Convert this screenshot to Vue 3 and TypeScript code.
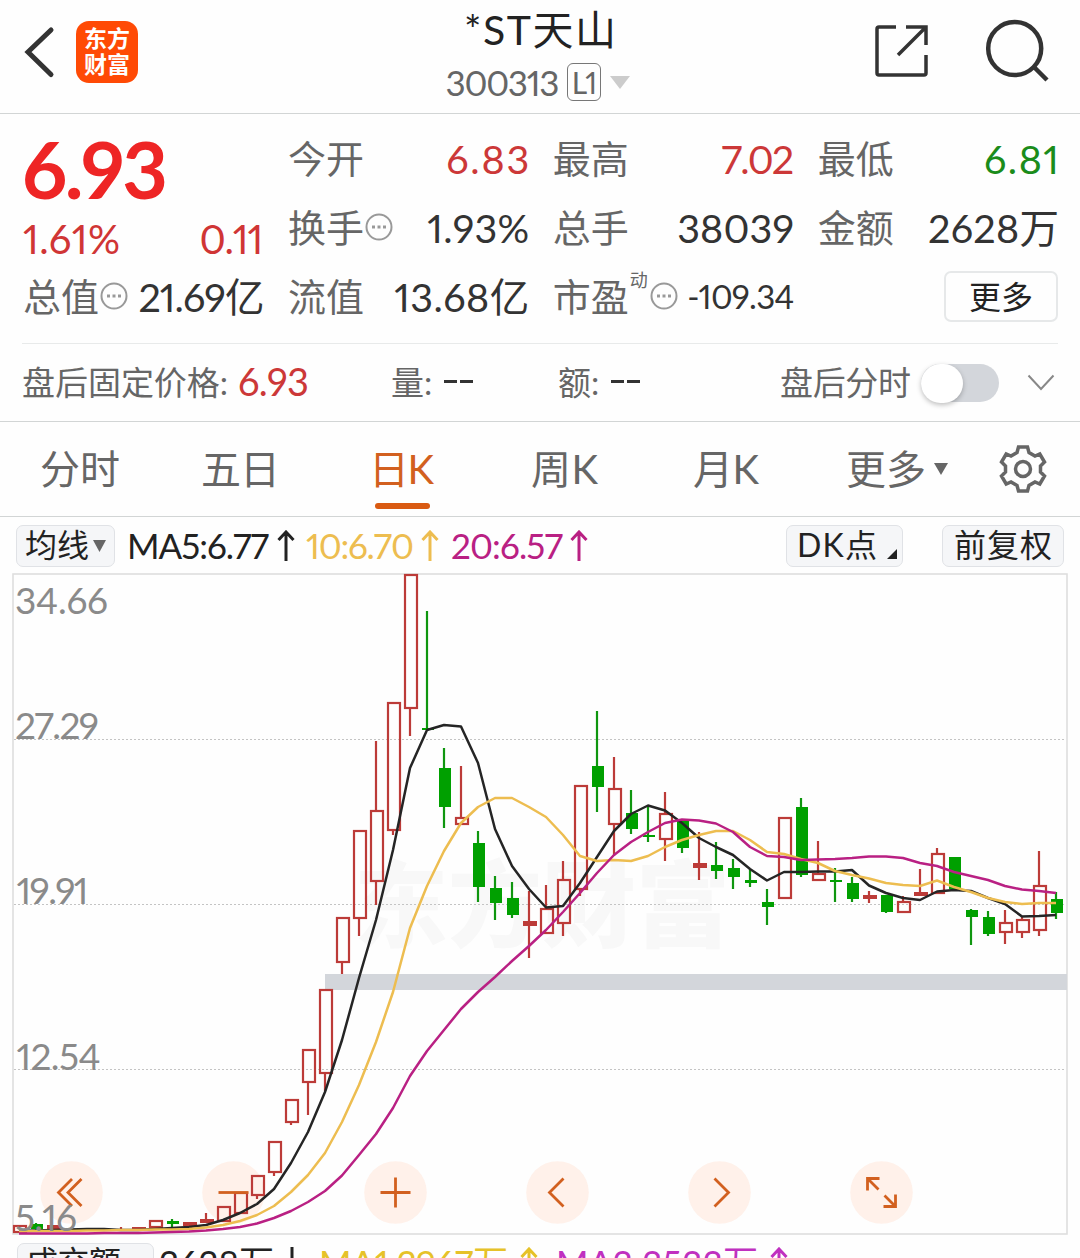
<script setup lang="ts">
import type { Directive } from 'vue'

// Adjusts tracking so that a label takes exactly the given width.
const vFit: Directive<HTMLElement, number> = {
  mounted(el, { value }) {
    const range = document.createRange()
    range.selectNodeContents(el)
    const natural = range.getBoundingClientRect().width
    const gaps = (el.textContent ?? '').trim().length - 1
    const spacing = (value - natural) / gaps
    el.style.letterSpacing = `${spacing}px`
    el.style.marginRight = `${-spacing}px`
  },
}

interface Cell {
  label: string
  value: string
  width: number
  tone?: 'up' | 'down'
  info?: boolean
  sup?: string
  small?: boolean
}

const columns: Cell[][] = [
  [
    { label: '今开', value: '6.83', width: 83, tone: 'up' },
    { label: '换手', value: '1.93%', width: 102, info: true },
    { label: '流值', value: '13.68亿', width: 135 },
  ],
  [
    { label: '最高', value: '7.02', width: 73, tone: 'up' },
    { label: '总手', value: '38039', width: 117 },
    { label: '市盈', value: '-109.34', width: 107, info: true, sup: '动', small: true },
  ],
  [
    { label: '最低', value: '6.81', width: 75, tone: 'down' },
    { label: '金额', value: '2628万', width: 131 },
  ],
]

const tabs = [
  { name: '分时', left: 40, width: 80 },
  { name: '五日', left: 81, width: 79 },
  { name: '日K', left: 89, width: 65, active: true },
  { name: '周K', left: 97, width: 67 },
  { name: '月K', left: 95, width: 66 },
  { name: '更多', left: 87, width: 80 },
]

// kind: r = hollow rising, f = solid rising, g = falling; then open/close edges and high/low.
type Candle = [kind: 'r' | 'f' | 'g', top: number, bottom: number, high: number, low: number]

const candles: Candle[] = [
  ['r', 1225, 1233, 1225, 1233], ['g', 1224, 1229, 1223, 1230], ['f', 1225, 1229, 1225, 1229],
  ['f', 1229, 1231, 1229, 1231], ['g', 1229, 1231, 1229, 1231], ['f', 1229, 1231, 1229, 1231],
  ['f', 1229, 1231, 1227, 1231], ['f', 1227, 1230, 1227, 1230], ['r', 1220, 1228, 1220, 1228],
  ['g', 1221, 1224, 1219, 1227], ['f', 1222, 1226, 1222, 1226], ['f', 1219, 1223, 1213, 1223],
  ['r', 1206, 1222, 1206, 1222], ['r', 1192, 1214, 1192, 1214], ['r', 1175, 1196, 1175, 1199],
  ['r', 1141, 1173, 1141, 1176], ['r', 1099, 1123, 1099, 1125], ['r', 1049, 1083, 1049, 1115],
  ['r', 989, 1074, 989, 1091], ['r', 917, 963, 917, 974], ['r', 830, 919, 830, 936],
  ['r', 810, 882, 741, 905], ['r', 702, 831, 702, 835], ['r', 574, 709, 574, 736],
  ['g', 728, 730, 611, 730], ['g', 768, 807, 748, 828], ['r', 817, 825, 766, 825],
  ['g', 843, 887, 831, 902], ['g', 888, 903, 876, 920], ['g', 898, 915, 882, 918],
  ['f', 921, 926, 891, 958], ['r', 908, 934, 885, 934], ['r', 879, 924, 861, 936],
  ['r', 785, 890, 785, 896], ['g', 766, 787, 711, 812], ['r', 788, 825, 757, 856],
  ['g', 813, 829, 790, 834], ['g', 835, 837, 807, 842], ['r', 813, 840, 792, 861],
  ['g', 820, 848, 820, 853], ['f', 863, 868, 832, 880], ['g', 865, 871, 842, 879],
  ['g', 868, 877, 859, 889], ['g', 880, 883, 869, 887], ['g', 902, 907, 889, 925],
  ['r', 817, 899, 817, 899], ['g', 807, 875, 798, 877], ['r', 873, 881, 841, 881],
  ['g', 880, 882, 868, 902], ['g', 883, 899, 877, 902], ['f', 895, 899, 891, 903],
  ['g', 895, 912, 895, 913], ['r', 901, 913, 896, 913], ['f', 892, 896, 869, 896],
  ['r', 853, 894, 848, 894], ['g', 857, 889, 857, 891], ['g', 910, 917, 909, 945],
  ['g', 917, 934, 911, 936], ['r', 922, 933, 910, 944], ['r', 919, 933, 917, 938],
  ['r', 885, 931, 851, 936], ['g', 899, 913, 892, 919],
]

const ma5 = [
  1231, 1230.5, 1230, 1229.5, 1229, 1229, 1230, 1230, 1229, 1228, 1227, 1225, 1220, 1213, 1204, 1189,
  1163, 1132, 1092, 1040, 978, 920, 850, 768, 730, 725, 726.5, 763, 829, 866, 889, 907.5, 906, 883,
  857, 831, 814, 805.5, 810.5, 823, 838, 847, 855, 869, 880.5, 872, 872, 871.5, 871.5, 870, 885.5,
  893, 898, 900, 891.5, 890, 891, 898, 904, 916.5, 916, 915,
]
const ma10 = [
  1231.5, 1231, 1231, 1231, 1230.5, 1230.5, 1230, 1230, 1229.5, 1229.5, 1229, 1227.5, 1225, 1221,
  1215, 1206, 1192, 1175, 1153, 1122, 1085, 1042, 992, 928, 886, 851, 823, 807, 798, 798, 807, 817,
  835, 856, 861, 860, 861, 856, 847, 840, 835, 831, 831, 840, 852, 854, 859, 863, 871, 875, 878.5,
  883, 885, 886, 880.5, 887, 892, 898, 902, 904, 903, 903,
]
const ma20 = [
  1233.5, 1233.5, 1233.5, 1233.5, 1233.5, 1233, 1233, 1233, 1232.5, 1232, 1231.5, 1230.5, 1229, 1227,
  1223.5, 1218, 1211, 1202, 1191, 1175.5, 1155, 1134, 1108, 1076, 1051, 1030, 1009, 992, 977, 961,
  946, 930, 912, 893, 873, 855, 842, 832, 823, 819.5, 820.5, 823.5, 832, 847, 856, 857, 860, 859.5,
  859, 858, 856.5, 856.5, 858, 863, 866, 872, 876, 880, 886, 889.5, 891, 893,
]

const xAt = (i: number) => 19 + 17 * i
const line = (values: number[]) => values.map((y, i) => `${xAt(i)},${y}`).join(' ')

const scale = [
  { text: '34.66', x: 15, y: 613.5, width: 93 },
  { text: '27.29', x: 15, y: 739, width: 84 },
  { text: '19.91', x: 16.5, y: 904, width: 72 },
  { text: '12.54', x: 16.5, y: 1070, width: 84 },
  { text: '5.16', x: 15, y: 1231, width: 62 },
]

const tools = [
  { x: 71, d: 'M0.500 -13.500 L-13 0 L0.500 13.500 M10 -13.500 L-3.500 0 L10 13.500' },
  { x: 233, d: 'M-15 0 H15' },
  { x: 395, d: 'M-15 0 H15 M0 -15 V15' },
  { x: 557, d: 'M6 -14 L-8 0 L6 14' },
  { x: 719, d: 'M-5 -14 L9 0 L-5 14' },
  { x: 881, d: 'M-14 -2 V-14 H-2 M-14 -14 L-3 -3 M14 2 V14 H2 M14 14 L3 3' },
]
</script>

<template>
  <main class="page">
    <header class="topbar">
      <div class="top-left">
        <svg class="back" width="34" height="54" viewBox="0 0 34 54">
          <path d="M29 5 L6 27 L29 49.500" fill="none" stroke="#333" stroke-width="5" stroke-linecap="round" />
        </svg>
        <div class="logo"><span>东方</span><span>财富</span></div>
      </div>
      <div class="title">
        <div class="name"><span v-fit="152">*ST天山</span></div>
        <div class="code">
          <span v-fit="114">300313</span>
          <span class="level">L1</span>
          <svg width="20" height="13" viewBox="0 0 20 13"><path d="M0 0 H20 L10 13 Z" fill="#ccc" /></svg>
        </div>
      </div>
      <div class="top-right">
        <svg width="54" height="54" viewBox="0 0 54 54" fill="none" stroke="#333" stroke-width="3.500">
          <path d="M22 3 H5 Q3 3 3 5 V49 Q3 51 5 51 H50 Q52 51 52 49 V31" />
          <path d="M32 3 H52 V21 M51 4 L24 31" />
        </svg>
        <svg width="64" height="64" viewBox="0 0 64 64" fill="none" stroke="#333" stroke-width="4.500">
          <circle cx="29.700" cy="29.500" r="26.500" /><path d="M49 48 L62 61" />
        </svg>
      </div>
    </header>

    <section class="quote">
      <div class="col">
        <div class="price"><span v-fit="146">6.93</span></div>
        <div class="change"><span v-fit="97">1.61%</span><span v-fit="64">0.11</span></div>
        <div class="cell">
          <span class="label">总值</span>
          <svg class="dots" width="28" height="28" viewBox="0 0 28 28">
            <circle cx="14" cy="14" r="12.500" /><path d="M7 14 h3 M12.500 14 h3 M18 14 h3" />
          </svg>
          <span class="value"><span v-fit="126">21.69亿</span></span>
        </div>
      </div>
      <div v-for="(col, c) in columns" :key="c" class="col">
        <div v-for="cell in col" :key="cell.label" class="cell">
          <span class="label">{{ cell.label }}</span>
          <sup v-if="cell.sup">{{ cell.sup }}</sup>
          <svg v-if="cell.info" class="dots" width="28" height="28" viewBox="0 0 28 28">
            <circle cx="14" cy="14" r="12.500" /><path d="M7 14 h3 M12.500 14 h3 M18 14 h3" />
          </svg>
          <span class="value" :class="[cell.tone, { small: cell.small }]"><span v-fit="cell.width">{{ cell.value }}</span></span>
        </div>
        <div v-if="c === 2" class="cell end"><button class="more">更多</button></div>
      </div>
    </section>

    <section class="after">
      <div class="fixed"><span v-fit="206">盘后固定价格:</span><b v-fit="71">6.93</b></div>
      <div class="vol"><span>量:</span><i></i><i></i></div>
      <div class="amt"><span>额:</span><i></i><i></i></div>
      <div class="toggle"><span v-fit="131">盘后分时</span><div class="switch"></div></div>
      <svg width="28" height="18" viewBox="0 0 28 18">
        <path d="M1.500 1.500 L14 15 L26.500 1.500" fill="none" stroke="#888" stroke-width="2" />
      </svg>
    </section>

    <nav class="tabs">
      <span
        v-for="tab in tabs" :key="tab.name" class="tab" :class="{ active: tab.active }"
        :style="{ marginLeft: tab.left + 'px', width: tab.width + 'px' }"
      ><span v-fit="tab.width">{{ tab.name }}</span></span>
      <svg class="caret" width="14" height="12" viewBox="0 0 14 12"><path d="M0 0 H14 L7 12 Z" fill="#666" /></svg>
      <svg class="gear" width="50" height="50" viewBox="-25 -25 50 50" fill="none" stroke="#666" stroke-width="3.500">
        <path
          d="M-4.500 -22 H4.500 L6 -16.500 L12 -13 L16.800 -15 L21.500 -7 L17.500 -3 V3 L21.500 7 L16.800 15 L12 13 L6 16.500 L4.500 22 H-4.500 L-6 16.500 L-12 13 L-16.800 15 L-21.500 7 L-17.500 3 V-3 L-21.500 -7 L-16.800 -15 L-12 -13 L-6 -16.500 Z"
        />
        <circle r="7.500" />
      </svg>
    </nav>

    <section class="averages">
      <button class="chip ma">
        <span v-fit="64">均线</span>
        <svg width="13" height="12" viewBox="0 0 13 12"><path d="M0 0 H13 L6.500 12 Z" fill="#666" /></svg>
      </button>
      <div class="avg"><span v-fit="142">MA5:6.77</span>
        <svg width="18" height="31" viewBox="0 0 18 31"><path d="M9 31 V2 M1.500 10 L9 2 L16.500 10" /></svg></div>
      <div class="avg gold"><span v-fit="108">10:6.70</span>
        <svg width="18" height="31" viewBox="0 0 18 31"><path d="M9 31 V2 M1.500 10 L9 2 L16.500 10" /></svg></div>
      <div class="avg pink"><span v-fit="112">20:6.57</span>
        <svg width="18" height="31" viewBox="0 0 18 31"><path d="M9 31 V2 M1.500 10 L9 2 L16.500 10" /></svg></div>
      <button class="chip dk">
        <span v-fit="80">DK点</span>
        <svg width="10" height="10" viewBox="0 0 10 10"><path d="M10 0 V10 H0 Z" fill="#222" /></svg>
      </button>
      <button class="chip adj"><span v-fit="98">前复权</span></button>
    </section>

    <svg class="chart" width="1080" height="665" viewBox="0 572 1080 665">
      <text class="watermark" x="354" y="940" textLength="376">东方财富</text>
      <g fill="none" stroke="#c4c4c4" stroke-dasharray="2 2">
        <path d="M14 739.500 H1066 M14 904.500 H1066 M14 1069.500 H1066" />
      </g>
      <rect x="13" y="574" width="1054" height="660" fill="none" stroke="#dedede" stroke-width="1.600" />
      <rect x="325" y="974" width="742" height="16" fill="#d3d6db" />
      <circle v-for="t in tools" :key="t.x" :cx="t.x + 0.5" cy="1192.500" r="31.300" fill="#fff1ea" />
      <g v-for="([kind, top, bottom, high, low], i) in candles" :key="i">
        <template v-if="kind === 'r'">
          <path :d="`M${xAt(i)} ${high} V${top} M${xAt(i)} ${bottom} V${low}`" stroke="#bc3b38" stroke-width="2.200" />
          <rect :x="xAt(i) - 5" :y="top + 1" width="12" :height="bottom - top - 2" fill="none" stroke="#bc3b38" stroke-width="2.200" />
        </template>
        <template v-else>
          <path :d="`M${xAt(i)} ${high} V${low}`" :stroke="kind === 'g' ? '#0f960f' : '#bc3b38'" stroke-width="2.200" />
          <rect
            :x="xAt(i) - (kind === 'g' ? 5 : 6)" :y="top" :width="kind === 'g' ? 12 : 14" :height="bottom - top"
            :fill="kind === 'g' ? '#00a000' : '#bc3b38'"
          />
        </template>
      </g>
      <g fill="none" stroke-width="2.500" stroke-linejoin="round">
        <polyline :points="line(ma5)" stroke="#252525" />
        <polyline :points="line(ma10)" stroke="#edbd50" />
        <polyline :points="line(ma20)" stroke="#b92083" />
      </g>
      <g fill="none" stroke="#d2601f" stroke-width="2.800">
        <path v-for="t in tools" :key="t.x" :d="t.d" :transform="`translate(${t.x + 0.5} 1192.500)`" />
      </g>
      <text
        v-for="s in scale" :key="s.text" class="scale" :x="s.x" :y="s.y" :textLength="s.width"
      >{{ s.text }}</text>
    </svg>

    <section class="volume">
      <button class="chip amount">
        <span v-fit="95">成交额</span>
        <svg width="13" height="12" viewBox="0 0 13 12"><path d="M0 0 H13 L6.500 12 Z" fill="#666" /></svg>
      </button>
      <div class="avg"><span v-fit="115">2628万</span>
        <svg width="18" height="31" viewBox="0 0 18 31"><path d="M9 0 V29 M1.500 21 L9 29 L16.500 21" /></svg></div>
      <div class="avg yellow"><span v-fit="189">MA1:2967万</span>
        <svg width="18" height="31" viewBox="0 0 18 31"><path d="M9 31 V2 M1.500 10 L9 2 L16.500 10" /></svg></div>
      <div class="avg violet"><span v-fit="202">MA2:3533万</span>
        <svg width="18" height="31" viewBox="0 0 18 31"><path d="M9 31 V2 M1.500 10 L9 2 L16.500 10" /></svg></div>
    </section>
  </main>
</template>

<style>
body {
  background: #fff;
}
</style>

<style scoped>
.page {
  display: flex;
  flex-direction: column;
  width: 1080px;
  height: 1258px;
  overflow: hidden;
  background: #fefefe;
  color: #333;
  font-family: Lato, "Noto Sans CJK SC", sans-serif;
  font-kerning: none;
  font-variant-numeric: proportional-nums;
  white-space: nowrap;
}
.page * {
  box-sizing: border-box;
}
svg {
  display: block;
  flex: none;
}
button {
  font-family: inherit;
  color: #222;
  padding: 0;
}

.topbar {
  display: flex;
  flex: none;
  justify-content: space-between;
  height: 114px;
  border-bottom: 1px solid #d2d5d5;
}
.top-left {
  display: flex;
  width: 300px;
  padding-left: 22px;
}
.back {
  margin-top: 25px;
}
.logo {
  display: flex;
  flex-direction: column;
  align-items: center;
  justify-content: center;
  width: 62px;
  height: 62px;
  margin: 21px 0 0 20px;
  padding-bottom: 2px;
  border-radius: 13px;
  background: #ff4a05;
  color: #fff;
  font-size: 23px;
  font-weight: 700;
  line-height: 26px;
}
.title {
  display: flex;
  flex-direction: column;
  align-items: center;
}
.name {
  height: 60px;
  color: #222;
  font-size: 41px;
  line-height: 59px;
}
.code {
  display: flex;
  align-items: center;
  height: 44px;
  padding-right: 5px;
  color: #666;
  font-size: 35px;
  line-height: 44px;
}
.level {
  width: 34px;
  height: 38px;
  margin: 0 9px 0 7px;
  border: 1.500px solid #777;
  border-radius: 6px;
  font-size: 30px;
  line-height: 36px;
  letter-spacing: -2px;
  text-align: center;
}
.top-right {
  display: flex;
  justify-content: flex-end;
  gap: 57px;
  width: 300px;
  padding-right: 31px;
}
.top-right svg:first-child {
  margin-top: 24px;
}
.top-right svg:last-child {
  margin-top: 19px;
}

.quote {
  display: flex;
  flex: none;
  gap: 24.500px;
  height: 229px;
  padding: 10px 22px 0 23px;
}
.col {
  width: 240.500px;
}
.price {
  height: 90px;
  color: #ee2525;
  font-size: 79px;
  font-weight: 700;
  line-height: 89px;
}
.price span {
  margin-left: -1px;
}
.change {
  display: flex;
  justify-content: space-between;
  height: 48px;
  color: #d03535;
  font-size: 40px;
  line-height: 51px;
}
.cell {
  display: flex;
  align-items: center;
  height: 69px;
  line-height: 69px;
}
.label {
  color: #666;
  font-size: 38px;
}
.value {
  margin-left: auto;
  margin-right: -1px;
  font-size: 39.500px;
}
.value.small {
  font-size: 33px;
}
.up {
  color: #cc3838;
}
.down {
  color: #1b8c1b;
}
sup {
  margin: 0 1px 0 1px;
  padding-bottom: 34px;
  color: #666;
  font-size: 18px;
  line-height: 20px;
}
.dots {
  margin-left: 1px;
  margin-bottom: 2px;
  fill: none;
  stroke: #999;
  stroke-width: 2;
}
.dots path {
  stroke-width: 3;
}
.end {
  justify-content: flex-end;
}
.more {
  width: 114px;
  height: 51px;
  border: 2px solid #e6e8e9;
  border-radius: 7px;
  background: none;
  font-size: 32px;
  line-height: 46px;
}

.after {
  display: flex;
  flex: none;
  align-items: center;
  height: 78px;
  margin-left: 22px;
  margin-right: 22px;
  border-top: 1px solid #e8eaea;
  color: #666;
  font-size: 33px;
}
.after span,
.after b {
  padding-bottom: 3px;
}
.after b {
  margin-left: 10px;
  color: #cc3838;
  font-size: 38px;
  font-weight: 400;
}
.fixed {
  display: flex;
  align-items: center;
  width: 369px;
}
.vol {
  display: flex;
  align-items: center;
  width: 167px;
}
.amt {
  display: flex;
  align-items: center;
  width: 222px;
}
.after i {
  width: 13px;
  height: 3px;
  margin: 0 3px 3px 0;
  background: #333;
}
.after i:nth-child(2) {
  margin-left: 12px;
}
.toggle {
  display: flex;
  align-items: center;
}
.switch {
  width: 78px;
  height: 38px;
  margin: 0 28px 0 10px;
  border-radius: 19px;
  background: #d3d6db;
}
.switch::before {
  content: "";
  display: block;
  width: 42px;
  height: 39px;
  border-radius: 21px;
  background: #fff;
  box-shadow: 0 2px 5px rgba(0, 0, 0, 0.25);
}

.tabs {
  display: flex;
  flex: none;
  align-items: center;
  height: 96px;
  border-top: 1px solid #d2d5d5;
  border-bottom: 1px solid #d2d5d5;
  color: #666;
  font-size: 40px;
}
.tab {
  flex: none;
  height: 94px;
  line-height: 94px;
}
.tab.active {
  position: relative;
  color: #d2601f;
}
.tab.active::after {
  content: "";
  position: absolute;
  left: 6px;
  bottom: 7px;
  width: 55px;
  height: 6px;
  border-radius: 3px;
  background: #d95a12;
}
.caret {
  margin-left: 8px;
}
.gear {
  margin-left: 50px;
}

.averages {
  display: flex;
  flex: none;
  align-items: center;
  height: 55px;
  padding: 2px 16px 0;
}
.chip {
  display: flex;
  flex: none;
  align-items: center;
  height: 42px;
  border: 1.500px solid #e0e2e6;
  border-radius: 7px;
  background: #f5f6f8;
  font-size: 32px;
  line-height: 38px;
}
.chip > span {
  padding-bottom: 2px;
}
.chip.ma {
  width: 99px;
  padding-left: 8px;
  margin-right: 12px;
}
.chip.ma svg {
  margin-left: 4px;
}
.avg {
  display: flex;
  align-items: center;
  margin-right: 12px;
  color: #222;
  font-size: 35px;
}
.avg > span {
  padding-bottom: 2px;
}
.avg svg {
  margin-left: 7px;
  fill: none;
  stroke: currentColor;
  stroke-width: 3;
}
.averages .avg:nth-child(2) svg {
  margin-left: 8px;
  margin-right: -1px;
}
.avg.gold {
  color: #edbd50;
}
.avg.pink {
  color: #b92083;
}
.chip.dk {
  width: 117px;
  margin-left: auto;
  margin-right: 39px;
  padding-left: 10px;
}
.chip.dk svg {
  margin: 16px 0 0 10px;
}
.chip.adj {
  width: 122px;
  padding-left: 11px;
}

.chart {
  font-family: Lato, "Noto Sans CJK SC", sans-serif;
}
.watermark {
  fill: #f8f8f8;
  font-size: 94px;
  font-weight: 900;
}
.scale {
  fill: #8a8a8a;
  font-size: 37px;
}

.volume {
  display: flex;
  flex: none;
  align-items: center;
  height: 52px;
  padding: 4px 17px 0;
}
.volume .avg {
  margin-right: 18px;
  padding-bottom: 5px;
}
.volume .avg > span {
  padding-bottom: 5px;
}
.volume .avg svg {
  margin-left: 12px;
}
.volume .avg:nth-child(2) svg {
  margin-left: 9px;
}
.chip.amount {
  width: 137px;
  height: 44px;
  padding-left: 8px;
  margin-right: 5px;
}
.chip.amount > span {
  padding-bottom: 6px;
}
.chip.amount svg {
  margin-left: 6px;
}
.yellow.avg {
  color: #e6c229;
}
.violet.avg {
  color: #c030c0;
}
</style>
